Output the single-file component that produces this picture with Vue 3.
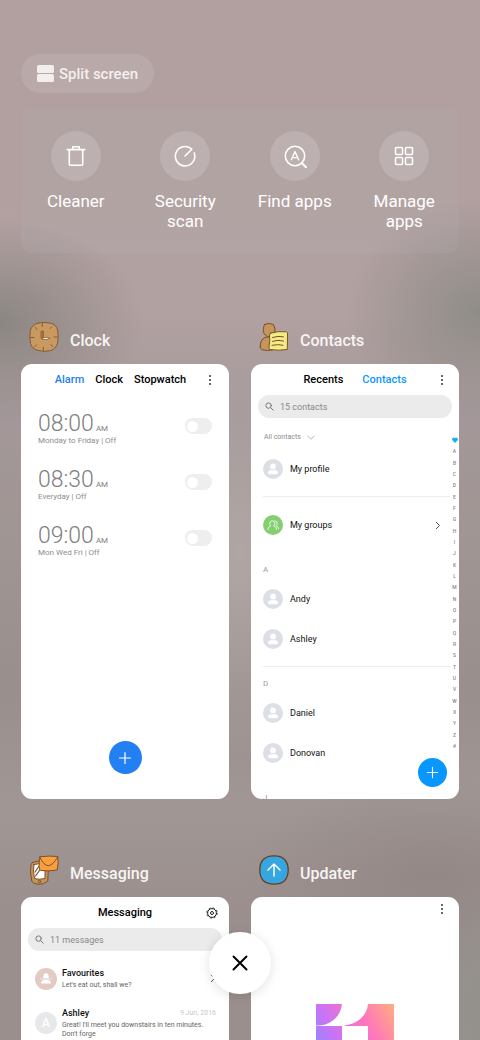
<script setup>
import { ref, reactive } from 'vue';

const alarms = reactive([
    { id: 1, time: '08:00', days: 'Monday to Friday', on: false },
    { id: 2, time: '08:30', days: 'Everyday', on: false },
    { id: 3, time: '09:00', days: 'Mon Wed Fri', on: false }
]);

const sections = [
    { letter: 'A', names: ['Andy', 'Ashley'], line: true },
    { letter: 'D', names: ['Daniel', 'Donovan'], line: false },
    { letter: 'J', names: [], line: false }
];

const letters = 'ABCDEFGHIJKLMNOPQRSTUVWXYZ#'.split('');

const clockTab = ref('Alarm');
const contactsTab = ref('Contacts');
const contactQuery = ref('');
const messageQuery = ref('');
const filter = ref('all');
</script>

<template>
    <main class="recents">
        <button type="button" class="split">
            <svg width="17" height="17" viewBox="0 0 17 17" fill="#f1eeed">
                <rect x="0" y="0" width="17" height="8" rx="1.5" />
                <rect x="0" y="9" width="17" height="8" rx="1.5" />
            </svg>
            <span>Split screen</span>
        </button>

        <nav class="tools">
            <button type="button" class="tool">
                <span class="tool-icon">
                    <svg width="24" height="24" viewBox="0 0 24 24" fill="none" stroke="#fff" stroke-width="1.6" stroke-linejoin="round" stroke-linecap="round">
                        <path d="M3.2 5.6H20.8M8.8 5.4V2.8H15.2V5.4M5.3 5.8V20.2a1 1 0 0 0 1 1H17.7a1 1 0 0 0 1-1V5.8" />
                    </svg>
                </span>
                <span class="tool-label">Cleaner</span>
            </button>
            <button type="button" class="tool">
                <span class="tool-icon">
                    <svg width="24" height="24" viewBox="0 0 24 24" fill="none" stroke="#fff" stroke-width="1.6" stroke-linejoin="round" stroke-linecap="round">
                        <path d="M12 12L18.800 5.200A9.700 9.700 0 1 0 21.200 8.900" />
                    </svg>
                </span>
                <span class="tool-label">Security scan</span>
            </button>
            <button type="button" class="tool">
                <span class="tool-icon">
                    <svg width="24" height="24" viewBox="0 0 24 24" fill="none" stroke="#fff" stroke-width="1.6" stroke-linejoin="round" stroke-linecap="round">
                        <circle cx="12" cy="12" r="9.7" />
                        <path d="M18.800 19L23 23.200" stroke-width="2" />
                        <path d="M8.300 15.800L12 7.600L15.700 15.800M10 13.600H14" stroke-width="1.4" />
                    </svg>
                </span>
                <span class="tool-label">Find apps</span>
            </button>
            <button type="button" class="tool">
                <span class="tool-icon">
                    <svg width="24" height="24" viewBox="0 0 24 24" fill="none" stroke="#fff" stroke-width="1.5">
                        <rect x="3.5" y="3.5" width="7" height="7" rx="1" />
                        <rect x="13.5" y="3.5" width="7" height="7" rx="1" />
                        <rect x="3.5" y="13.5" width="7" height="7" rx="1" />
                        <rect x="13.5" y="13.5" width="7" height="7" rx="1" />
                    </svg>
                </span>
                <span class="tool-label">Manage apps</span>
            </button>
        </nav>

        <div class="apps">
            <section class="app">
                <header class="app-head">
                    <svg class="app-icon" width="30" height="30" viewBox="0 0 30 30" fill="none" stroke-linecap="round">
                        <path d="M9 1.200Q15 -.4 21.500 1.200Q27 2.200 28.600 8Q29.800 15 28.600 21Q27 27 21.500 28.600Q15 30.200 9 28.400Q3 27 1.500 21.500Q.2 15 1.300 8.500Q3 2.500 9 1.200Z" fill="#c89a62" stroke="#86592f" stroke-width="1" />
                        <path d="M13.300 1.500V4.500M14.300 25.500V28.500M1.500 15.500H5M25 15H28.300M6.500 5.500L8 7.300M22.500 5L21.300 6.500M6 24.500L7.500 22.800M23.500 24.500L22 22.500" stroke="#86592f" stroke-width="1" />
                        <path d="M12.200 9.300Q13.300 8.200 14.400 9.300L14.500 16.200H12.400Z" fill="#a6733d" stroke="#86592f" stroke-width=".8" />
                        <path d="M13.500 16Q17.500 14.800 21 16.200Q19 18 13.500 17.600Z" fill="#fff" stroke="#86592f" stroke-width=".8" />
                    </svg>
                    <h2>Clock</h2>
                </header>
                <article class="card clock">
                    <header class="card-head">
                        <div class="tabs clock-tabs">
                            <button
                                v-for="tab in ['Alarm', 'Clock', 'Stopwatch']"
                                :key="tab"
                                type="button"
                                :class="{ active: tab === clockTab }"
                                @click="clockTab = tab"
                            >{{ tab }}</button>
                        </div>
                        <button type="button" class="more" aria-label="More">
                            <svg width="4" height="12" viewBox="0 0 4 12"><circle cx="2" cy="2" r=".9" /><circle cx="2" cy="6" r=".9" /><circle cx="2" cy="10" r=".9" /></svg>
                        </button>
                    </header>
                    <ul class="alarms">
                        <li v-for="alarm in alarms" :key="alarm.id">
                            <label :for="'alarm-' + alarm.id">
                                <span class="time">{{ alarm.time }}<small>AM</small></span>
                                <span class="days">{{ alarm.days }} | {{ alarm.on ? 'On' : 'Off' }}</span>
                            </label>
                            <input :id="'alarm-' + alarm.id" v-model="alarm.on" type="checkbox" class="switch">
                        </li>
                    </ul>
                    <button type="button" class="fab clock-fab" aria-label="Add alarm">
                        <svg width="14" height="14" viewBox="0 0 14 14" stroke="#fff" stroke-width="1.2" stroke-linecap="round"><path d="M7 1.500V12.500M1.500 7H12.500" /></svg>
                    </button>
                </article>
            </section>

            <section class="app">
                <header class="app-head">
                    <svg class="app-icon" width="30" height="30" viewBox="0 0 30 30" stroke="#7b5028" stroke-width="1" stroke-linecap="round" stroke-linejoin="round">
                        <path d="M1.300 25Q.8 18 6 15.500Q10 13.500 13.500 16.500V28Q8 29 3 27.800Q1.500 27 1.300 25Z" fill="#c6955d" />
                        <path d="M5.500 2.500Q10 .3 14.500 2.500Q17 7 15.500 11.500Q13 15.500 8.500 14.500Q4 12.500 4.300 7.500Q4.300 4.500 5.500 2.500Z" fill="#c6955d" />
                        <path d="M11.500 11.200Q19 8.800 27.500 9.800Q28.500 10.200 28.500 12L28.300 27.500Q20 28.800 11 27.600Q9.600 27.200 10 25Q11.300 18 10.500 13Q10.500 11.700 11.500 11.200Z" fill="#f3ec84" />
                        <path d="M13.500 15.500Q19 13.500 24.500 14.800M13.500 19.300Q19 17.500 24.500 19M13 23.300Q19 22 24 23.200" fill="none" />
                    </svg>
                    <h2>Contacts</h2>
                </header>
                <article class="card contacts">
                    <header class="card-head">
                        <div class="tabs contacts-tabs">
                            <button
                                v-for="tab in ['Recents', 'Contacts']"
                                :key="tab"
                                type="button"
                                :class="{ active: tab === contactsTab }"
                                @click="contactsTab = tab"
                            >{{ tab }}</button>
                        </div>
                        <button type="button" class="more" aria-label="More">
                            <svg width="4" height="12" viewBox="0 0 4 12"><circle cx="2" cy="2" r=".9" /><circle cx="2" cy="6" r=".9" /><circle cx="2" cy="10" r=".9" /></svg>
                        </button>
                    </header>
                    <label class="search">
                        <svg width="9" height="9" viewBox="0 0 9 9" fill="none" stroke="#777" stroke-width="1" stroke-linecap="round"><circle cx="3.6" cy="3.6" r="2.7" /><path d="M5.700 5.700L8.200 8.200" /></svg>
                        <input v-model="contactQuery" type="text" placeholder="15 contacts" aria-label="Search contacts">
                    </label>
                    <div class="contacts-body">
                        <div class="contact-list">
                            <div class="filter">
                                <select v-model="filter" aria-label="Contact filter">
                                    <option value="all">All contacts</option>
                                </select>
                                <svg width="8" height="5" viewBox="0 0 8 5" fill="none" stroke="#999" stroke-width=".7"><path d="M.5 .8L4 4.300L7.500 .8" /></svg>
                            </div>
                            <div class="group first line">
                                <div class="person">
                                    <svg class="avatar" viewBox="0 0 20 20"><circle cx="10" cy="10" r="10" fill="#dcdfe5" /><circle cx="10" cy="7.4" r="2.9" fill="#fff" /><path d="M5 13.800Q5 11.200 8 11.200H12Q15 11.200 15 13.800Q15 15.200 13.500 15.200H6.500Q5 15.200 5 13.800Z" fill="#fff" /></svg>
                                    <span>My profile</span>
                                </div>
                            </div>
                            <div class="group">
                                <div class="person">
                                    <svg class="avatar" viewBox="0 0 20 20" fill="none" stroke="#fff" stroke-width=".8" stroke-linecap="round">
                                        <circle cx="10" cy="10" r="10" fill="#85cf70" stroke="none" />
                                        <path d="M4.800 14.500Q5 11.600 7.700 10.900Q6.500 9.800 6.700 8Q7.200 5.800 9.300 5.800Q11.500 5.900 11.800 8Q11.800 9.800 10.700 10.900Q13.300 11.600 13.600 14.500M12 5.800Q14 6 14.200 8Q14.200 9.600 13.100 10.600Q15.300 11.500 15.600 13.800" />
                                    </svg>
                                    <span>My groups</span>
                                    <svg class="chevron" width="6" height="9" viewBox="0 0 6 9" fill="none" stroke="#555" stroke-width="1"><path d="M1 1L4.500 4.500L1 8" /></svg>
                                </div>
                            </div>
                            <div v-for="section in sections" :key="section.letter" class="group" :class="{ line: section.line }">
                                <h3>{{ section.letter }}</h3>
                                <div v-for="name in section.names" :key="name" class="person">
                                    <svg class="avatar" viewBox="0 0 20 20"><circle cx="10" cy="10" r="10" fill="#dcdfe5" /><circle cx="10" cy="7.4" r="2.9" fill="#fff" /><path d="M5 13.800Q5 11.200 8 11.200H12Q15 11.200 15 13.800Q15 15.200 13.500 15.200H6.500Q5 15.200 5 13.800Z" fill="#fff" /></svg>
                                    <span>{{ name }}</span>
                                </div>
                            </div>
                        </div>
                        <div class="index">
                            <svg width="6" height="6" viewBox="0 0 6 6" fill="#0fb2f7"><path d="M3 6L.6 3.600Q-.4 2 .7 .9Q2 0 3 1.200Q4 0 5.300 .9Q6.400 2 5.400 3.600Z" /></svg>
                            <span v-for="letter in letters" :key="letter">{{ letter }}</span>
                        </div>
                    </div>
                    <button type="button" class="fab contacts-fab" aria-label="Add contact">
                        <svg width="13" height="13" viewBox="0 0 14 14" stroke="#fff" stroke-width="1.2" stroke-linecap="round"><path d="M7 1.500V12.500M1.500 7H12.500" /></svg>
                    </button>
                </article>
            </section>

            <section class="app">
                <header class="app-head">
                    <svg class="app-icon" width="30" height="30" viewBox="0 0 30 30" stroke="#7b5028" stroke-width="1" stroke-linecap="round" stroke-linejoin="round">
                        <path d="M3.500 7.500Q8 5.500 14 6.300Q19 7 19.500 10L18.800 26Q15 29.500 10 29.300Q4 28.800 2.800 26Q.5 16 2 9.500Q2.500 8 3.500 7.500Z" fill="#c6955d" />
                        <path d="M5 9.500Q10 8 16 9.300L16 23.500Q10 25 5.500 23.500Q3.500 16 5 9.500Z" fill="#fff" />
                        <path d="M6 17L10.500 10.500M6.500 21L13 12" stroke-width="1.200" fill="none" />
                        <circle cx="10.5" cy="26.500" r="1.2" fill="none" />
                        <path d="M11 1.800Q20 .5 28.800 1.500Q29.800 8 28.200 15Q20 16.500 11.500 15.500Q9.800 14.500 10.200 8Q10 3 11 1.800Z" fill="#f99f42" />
                        <path d="M10.800 2.500Q15 10.500 19.500 10.800Q24 10 28.600 2.200" fill="none" />
                    </svg>
                    <h2>Messaging</h2>
                </header>
                <article class="card messaging">
                    <header class="card-head">
                        <h3 class="card-title">Messaging</h3>
                        <button type="button" class="more" aria-label="Settings">
                            <svg width="12" height="12" viewBox="0 0 12 12" fill="none" stroke="#222"><circle cx="6" cy="6" r="4.4" stroke-width="1" /><circle cx="6" cy="6" r="5.2" stroke-width=".9" stroke-dasharray="2.040 2.044" /><circle cx="6" cy="6" r="1.5" stroke-width="1" /></svg>
                        </button>
                    </header>
                    <label class="search">
                        <svg width="9" height="9" viewBox="0 0 9 9" fill="none" stroke="#777" stroke-width="1" stroke-linecap="round"><circle cx="3.6" cy="3.6" r="2.7" /><path d="M5.700 5.700L8.200 8.200" /></svg>
                        <input v-model="messageQuery" type="text" placeholder="11 messages" aria-label="Search messages">
                    </label>
                    <ul class="threads">
                        <li>
                            <svg class="photo" viewBox="0 0 22 22"><circle cx="11" cy="11" r="11" fill="#e3cac3" /><path d="M8.300 8.500Q8.300 5.500 11 5.200Q13.700 5.500 13.700 8.500V10.500H8.300Z" fill="#fff" /><path d="M6 15.500Q6 12.500 9 12H13Q16 12.500 16 15.500Z" fill="#fff" /><path d="M5.500 11H16.500" stroke="#e6e3ec" stroke-width="1.500" /></svg>
                            <div class="thread">
                                <h4>Favourites</h4>
                                <p>Let's eat out, shall we?</p>
                            </div>
                            <svg class="chevron" width="6" height="9" viewBox="0 0 6 9" fill="none" stroke="#555" stroke-width="1"><path d="M1 1L4.500 4.500L1 8" /></svg>
                        </li>
                        <li>
                            <span class="photo initial">A</span>
                            <div class="thread">
                                <h4>Ashley<time>9 Jun, 2016</time></h4>
                                <p>Great! I'll meet you downstairs in ten minutes. Don't forge</p>
                            </div>
                        </li>
                    </ul>
                </article>
            </section>

            <section class="app">
                <header class="app-head">
                    <svg class="app-icon" width="30" height="30" viewBox="0 0 30 30" stroke-linecap="round" stroke-linejoin="round">
                        <path d="M15 .9C20 .8 23.500 2 26 5C28.500 8 29.200 11 29.200 15C29.200 19.500 28.200 23 25.500 25.700C22.500 28.500 19.500 29.100 15 29.100C10.500 29.100 7 28.300 4.300 25.500C1.500 22.700 .8 19.500 .8 15C.8 10.500 1.600 7.300 4.300 4.500C7 1.700 10.500 .9 15 .9Z" fill="#36a6e0" stroke="#663f20" stroke-width="1.3" />
                        <path d="M15 21V9.500M9 15L15 9L21 15" fill="none" stroke="#fff" stroke-width="1.5" />
                    </svg>
                    <h2>Updater</h2>
                </header>
                <article class="card updater">
                    <header class="card-head">
                        <button type="button" class="more" aria-label="More">
                            <svg width="4" height="12" viewBox="0 0 4 12"><circle cx="2" cy="2" r=".9" /><circle cx="2" cy="6" r=".9" /><circle cx="2" cy="10" r=".9" /></svg>
                        </button>
                    </header>
                    <svg class="logo" width="78" height="78" viewBox="0 0 78 78">
                        <defs>
                            <linearGradient id="logo-fill" x1="0" y1=".55" x2="1" y2="0">
                                <stop offset="0" stop-color="#9587ff" />
                                <stop offset=".25" stop-color="#c973f5" />
                                <stop offset=".62" stop-color="#ff75bc" />
                                <stop offset="1" stop-color="#ffad80" />
                            </linearGradient>
                        </defs>
                        <path d="M0 0H26C25 12 15 21 3 21.500H0ZM0 22H26V78H0ZM52 0H78V78H52V22H28.500V21.500C41 20 51 12 52 0Z" fill="url(#logo-fill)" />
                    </svg>
                </article>
            </section>
        </div>

        <button type="button" class="close" aria-label="Close all">
            <svg width="16" height="16" viewBox="0 0 16 16" stroke="#000" stroke-width="2" stroke-linecap="round"><path d="M1.500 1.500L14.500 14.500M14.500 1.500L1.500 14.500" /></svg>
        </button>
    </main>
</template>

<style>
body {
    margin: 0;
    background: #9b908e;
}
</style>

<style scoped>
.recents {
    box-sizing: border-box;
    height: 100vh;
    overflow: hidden;
    padding: 54px 21px 0;
    font-family: Roboto, "Liberation Sans", sans-serif;
    background:
        radial-gradient(ellipse 30% 10% at 0% 31%, #8b8682 0%, rgba(139, 134, 130, 0) 100%),
        radial-gradient(ellipse 28% 11% at 100% 30%, #8f8c87 0%, rgba(143, 140, 135, 0) 100%),
        radial-gradient(ellipse 12% 12% at 100% 97%, #92918b 0%, rgba(146, 145, 139, 0) 100%),
        radial-gradient(ellipse 40% 9% at 90% 84%, rgba(143, 132, 130, 0.7) 0%, rgba(143, 132, 130, 0) 100%),
        radial-gradient(ellipse 20% 20% at 50% 53%, #b0a7a5 0%, rgba(176, 167, 165, 0) 100%),
        linear-gradient(180deg, #b1a09f 0%, #b1a09f 18%, #b2a1a1 30%, #a4989a 40%, #9f9592 52%, #998f8d 66%, #a09694 78%, #9a8f8d 88%, #9a8f8d 100%);
}

button {
    border: none;
    background: none;
    padding: 0;
    margin: 0;
    font-family: inherit;
    cursor: pointer;
}

h2,
h3,
h4,
p,
ul {
    margin: 0;
    padding: 0;
    list-style: none;
}

svg {
    display: block;
    flex: none;
}

.split {
    display: flex;
    align-items: center;
    gap: 5px;
    height: 39px;
    padding: 0 16px;
    border-radius: 20px;
    background: rgba(255, 255, 255, 0.1);
    color: #f3f0ef;
    font-size: 15px;
    font-weight: 500;
}

.tools {
    display: grid;
    grid-template-columns: repeat(4, 1fr);
    margin-top: 15px;
    padding: 23px 0 22px;
    border-radius: 10px;
    background: rgba(185, 185, 190, 0.14);
}

.tool {
    display: flex;
    flex-direction: column;
    align-items: center;
    gap: 10px;
    padding: 0 14px;
    color: #fff;
    font-size: 17px;
    line-height: 20px;
}

.tool-icon {
    display: flex;
    align-items: center;
    justify-content: center;
    width: 50px;
    height: 50px;
    border-radius: 50%;
    background: rgba(255, 255, 255, 0.15);
}

.apps {
    display: grid;
    grid-template-columns: 1fr 1fr;
    gap: 54px 22px;
    margin-top: 67px;
}

.app {
    min-width: 0;
}

.app-head {
    display: flex;
    align-items: center;
    gap: 11px;
    height: 34px;
    padding-left: 8px;
    margin-bottom: 10px;
}

.app-head h2 {
    padding-top: 6px;
    color: #f7f4f3;
    font-size: 16px;
    font-weight: 500;
}

.card {
    position: relative;
    display: flex;
    flex-direction: column;
    height: 435px;
    overflow: hidden;
    border-radius: 11px;
    background: #fff;
}

.card-head {
    display: flex;
    flex: none;
    align-items: center;
    height: 31px;
    padding: 0 7px 0 28px;
}

.clock .card-head {
    padding: 0 9px 0 21px;
}

.tabs {
    display: flex;
    flex: 1;
    justify-content: center;
}

.clock-tabs {
    gap: 11px;
}

.contacts-tabs {
    gap: 19px;
}

.tabs button,
.card-title {
    color: #000;
    font-size: 11px;
    font-weight: 500;
    line-height: 14px;
}

.clock-tabs .active {
    color: #2380f3;
}

.contacts-tabs .active {
    color: #0b98ff;
}

.card-title {
    flex: 1;
    text-align: center;
}

.more {
    display: flex;
    align-items: center;
    justify-content: center;
    width: 21px;
    height: 24px;
    margin-left: auto;
    fill: #222;
}

.alarms {
    padding: 17px 17px 0;
}

.alarms li {
    display: flex;
    align-items: flex-start;
    justify-content: space-between;
    height: 56px;
}

.time {
    display: flex;
    align-items: baseline;
    height: 24px;
    color: #808080;
    font-size: 23px;
    font-weight: 300;
    line-height: 24px;
}

.time small {
    margin-left: 2px;
    font-size: 8px;
    font-weight: 400;
}

.days {
    display: block;
    color: #8c8c8c;
    font-size: 8px;
    line-height: 10px;
}

.switch {
    appearance: none;
    display: flex;
    align-items: center;
    box-sizing: border-box;
    width: 27px;
    height: 16px;
    margin: 6px 0 0;
    padding: 0 2px;
    border-radius: 8px;
    background: #eee;
}

.switch::before {
    content: "";
    width: 11px;
    height: 11px;
    border-radius: 50%;
    background: #fff;
}

.switch:checked {
    justify-content: flex-end;
    background: #2380f3;
}

.fab {
    display: flex;
    align-items: center;
    justify-content: center;
    border-radius: 50%;
}

.clock-fab {
    width: 33px;
    height: 33px;
    margin: auto auto 25px;
    background: #2380f3;
}

.contacts-fab {
    position: absolute;
    right: 12px;
    bottom: 12px;
    width: 29px;
    height: 29px;
    background: #0797ff;
}

.search {
    display: flex;
    flex: none;
    align-items: center;
    gap: 6px;
    height: 23px;
    margin: 0 7px;
    padding: 0 7px;
    border-radius: 12px;
    background: #ebebeb;
}

.search input {
    flex: 1;
    min-width: 0;
    padding: 0;
    border: none;
    outline: none;
    background: none;
    color: #333;
    font-family: inherit;
    font-size: 9px;
}

.search input::placeholder {
    color: #888;
    opacity: 1;
}

.contacts-body {
    display: flex;
    align-items: flex-start;
}

.contact-list {
    flex: 1;
    padding-left: 12px;
}

.filter {
    display: flex;
    align-items: center;
    gap: 6px;
    height: 14px;
    margin-top: 12px;
}

.filter select {
    appearance: none;
    padding: 0 0 0 1px;
    border: none;
    outline: none;
    background: none;
    color: #8c8c8c;
    font-family: inherit;
    font-size: 7px;
}

.group {
    padding: 8px 0 7px;
    border-bottom: 1px solid transparent;
}

.group.first {
    padding-top: 5px;
}

.group.line {
    border-color: #ececec;
}

.group h3 {
    color: #999ba5;
    font-size: 8px;
    font-weight: 400;
    line-height: 18px;
}

.person {
    display: flex;
    align-items: center;
    gap: 7px;
    height: 40px;
    color: #111;
    font-size: 9px;
}

.avatar {
    width: 20px;
    height: 20px;
}

.person .chevron {
    margin: 0 9px 0 auto;
}

.index {
    display: flex;
    flex: none;
    flex-direction: column;
    align-items: center;
    justify-content: space-between;
    width: 9px;
    height: 312px;
    margin-top: 19px;
    color: #888;
    font-size: 5px;
    font-weight: 500;
    line-height: 6px;
}

.threads {
    display: flex;
    flex-direction: column;
    gap: 17px;
    padding: 16px 13px 0 14px;
}

.threads li {
    display: flex;
    align-items: center;
    gap: 5px;
}

.photo {
    flex: none;
    width: 22px;
    height: 22px;
}

.initial {
    border-radius: 50%;
    background: #e7e8ea;
    color: #fff;
    font-size: 12px;
    font-weight: 500;
    line-height: 22px;
    text-align: center;
}

.thread {
    flex: 1;
}

.thread h4 {
    display: flex;
    justify-content: space-between;
    margin-bottom: 2px;
    color: #111;
    font-size: 9px;
    font-weight: 500;
    line-height: 12px;
}

.thread time {
    color: #c8c8c8;
    font-size: 7px;
    font-weight: 400;
}

.thread p {
    color: #666;
    font-size: 7px;
    line-height: 9px;
}

.updater .card-head {
    height: 24px;
}

.logo {
    margin: 83px auto 0;
}

.close {
    position: fixed;
    bottom: 46px;
    left: 50%;
    display: flex;
    align-items: center;
    justify-content: center;
    width: 62px;
    height: 62px;
    border-radius: 50%;
    background: #fff;
    box-shadow: 0 2px 12px rgba(0, 0, 0, 0.12);
    transform: translateX(-50%);
}
</style>
